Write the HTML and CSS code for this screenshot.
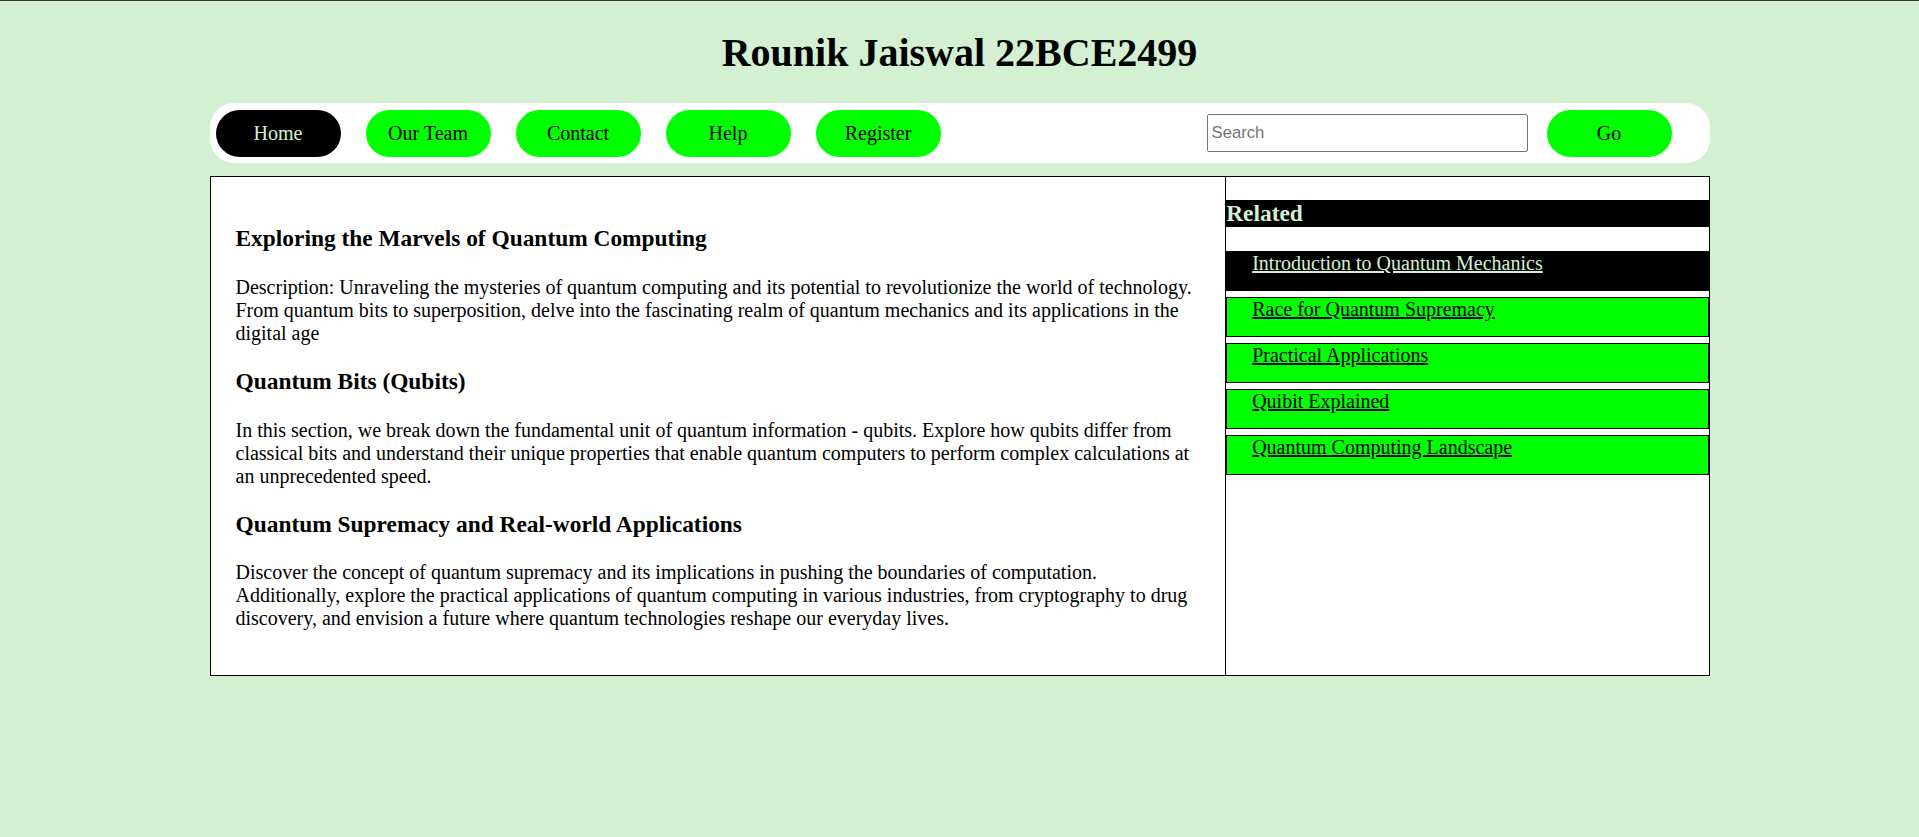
FILE: index.html
```html
<!DOCTYPE html>
<html lang="en">
<head>
<meta charset="utf-8">
<title>Rounik Jaiswal 22BCE2499</title>
<link rel="stylesheet" href="styles.css">
</head>
<body>
<h1 class="title">Rounik Jaiswal 22BCE2499</h1>
<nav class="navbar">
  <div class="nav-links">
    <a class="nav-btn active" href="#">Home</a>
    <a class="nav-btn" href="#">Our Team</a>
    <a class="nav-btn" href="#">Contact</a>
    <a class="nav-btn" href="#">Help</a>
    <a class="nav-btn" href="#">Register</a>
  </div>
  <form class="search">
    <input class="search-input" type="text" placeholder="Search">
    <button class="nav-btn go" type="button">Go</button>
  </form>
</nav>
<div class="page">
  <main class="article">
    <h3 class="heading">Exploring the Marvels of Quantum Computing</h3>
    <p class="text">Description: Unraveling the mysteries of quantum computing and its potential to revolutionize the world of technology. From quantum bits to superposition, delve into the fascinating realm of quantum mechanics and its applications in the digital age</p>
    <h3 class="heading">Quantum Bits (Qubits)</h3>
    <p class="text">In this section, we break down the fundamental unit of quantum information - qubits. Explore how qubits differ from classical bits and understand their unique properties that enable quantum computers to perform complex calculations at an unprecedented speed.</p>
    <h3 class="heading">Quantum Supremacy and Real-world Applications</h3>
    <p class="text">Discover the concept of quantum supremacy and its implications in pushing the boundaries of computation. Additionally, explore the practical applications of quantum computing in various industries, from cryptography to drug discovery, and envision a future where quantum technologies reshape our everyday lives.</p>
  </main>
  <aside class="sidebar">
    <h3 class="side-title">Related</h3>
    <ul class="side-list">
      <li class="side-item current"><a href="#">Introduction to Quantum Mechanics</a></li>
      <li class="side-item"><a href="#">Race for Quantum Supremacy</a></li>
      <li class="side-item"><a href="#">Practical Applications</a></li>
      <li class="side-item"><a href="#">Quibit Explained</a></li>
      <li class="side-item"><a href="#">Quantum Computing Landscape</a></li>
    </ul>
  </aside>
</div>
</body>
</html>
```
FILE: styles.css
```css
html {
  border-top: 1px solid #3a3a3a;
}

body {
  margin: 0 10px 10px;
  padding-top: 28px;
  background: #d3f0d3;
  font-family: "Liberation Serif", "Times New Roman", serif;
  font-size: 20px;
  color: #000;
}

.title {
  font-size: 40px;
  font-weight: bold;
  text-align: center;
  margin: 0 0 27px;
  line-height: normal;
}

.navbar {
  width: 1500px;
  box-sizing: border-box;
  margin: 0 auto;
  height: 60px;
  background: #fff;
  border-radius: 24px;
  padding: 6px 38px 6px 6px;
  display: flex;
  align-items: center;
  justify-content: space-between;
}

.nav-links {
  display: flex;
  gap: 25px;
}

.nav-btn {
  display: flex;
  align-items: center;
  justify-content: center;
  width: 125px;
  height: 47px;
  border-radius: 24px;
  background: #00ff00;
  color: #000;
  text-decoration: none;
  font-family: "Liberation Serif", "Times New Roman", serif;
  font-size: 20px;
  border: none;
  padding: 0;
  box-sizing: border-box;
}

.nav-btn.active {
  background: #000;
  color: #d3f0d3;
}

.search {
  display: flex;
  align-items: center;
  gap: 19px;
  margin: 0;
}

.search-input {
  width: 321px;
  height: 38px;
  box-sizing: border-box;
  border: 1px solid #767676;
  border-radius: 2px;
  padding: 1px 4px;
  font-family: "Liberation Sans", Arial, sans-serif;
  font-size: 16.7px;
  margin: 0;
}

.search-input::placeholder {
  color: #757575;
}

.page {
  width: 1500px;
  box-sizing: border-box;
  margin: 13px auto 0;
  background: #fff;
  border: 1px solid #000;
  display: flex;
}

.article {
  flex: 2 1 0;
  padding: 25px;
}

.heading {
  font-size: 23.4px;
  font-weight: bold;
  margin: 23.4px 0;
  line-height: normal;
}

.text {
  margin: 20px 0;
  line-height: normal;
}

.sidebar {
  flex: 1 1 0;
  border-left: 1px solid #000;
}

.side-title {
  font-size: 23.4px;
  font-weight: bold;
  margin: 23.4px 0;
  background: #000;
  color: #d3f0d3;
  line-height: normal;
}

.side-list {
  list-style: none;
  margin: 0;
  padding: 0;
}

.side-item {
  height: 40px;
  box-sizing: border-box;
  border: 1px solid #000;
  background: #00ff00;
  margin-bottom: 6px;
  padding-left: 25px;
  line-height: 23px;
}

.side-item a {
  color: #000;
}

.side-item.current {
  background: #000;
}

.side-item.current a {
  color: #d3f0d3;
}
```
